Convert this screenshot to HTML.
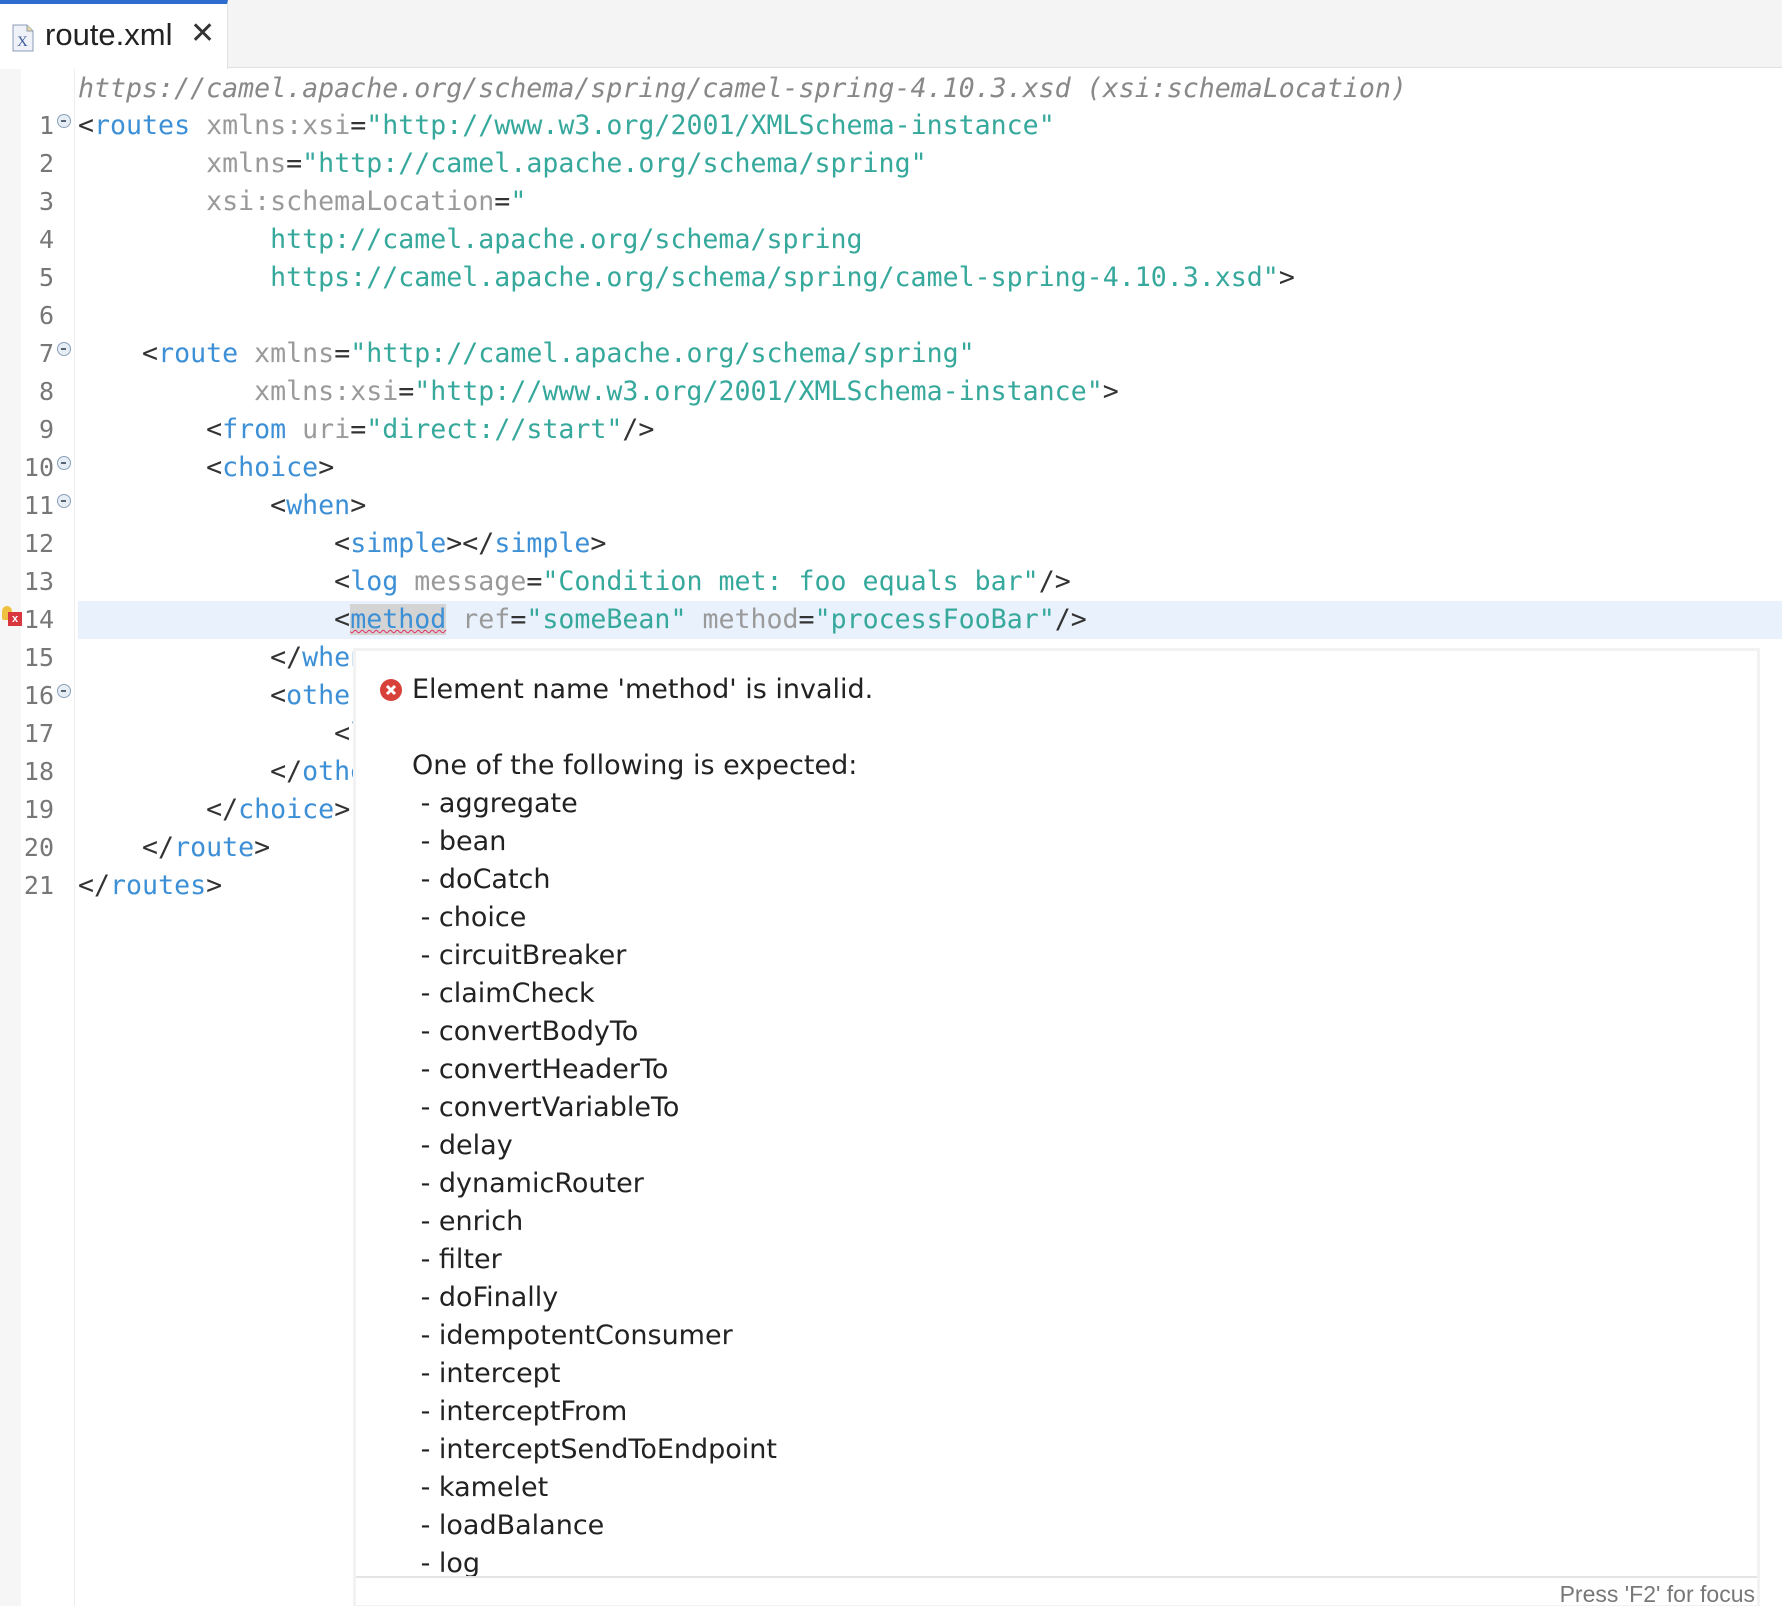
<!DOCTYPE html>
<html><head><meta charset="utf-8"><style>
*{margin:0;padding:0;box-sizing:border-box}
html,body{width:1782px;height:1606px;overflow:hidden;background:#fff;position:relative}
.tabbar{position:absolute;left:0;top:0;width:1782px;height:68px;background:#f4f4f4;border-bottom:1px solid #e2e2e2}
.tab{position:absolute;left:0;top:0;width:228px;height:69px;background:#fff;border-top:4px solid #2f6ccf;border-right:1px solid #e2e2e2}
.tab .t{position:absolute;left:45px;top:13px;font:31px "Liberation Sans",sans-serif;color:#222}
.tab .x{position:absolute;left:190px;top:12px;font:30px "Liberation Sans",sans-serif;color:#333}
.gut{position:absolute;left:0;top:69px;width:21px;height:1537px;background:#f6f6f6}
.gline{position:absolute;left:74px;top:69px;width:1px;height:1537px;background:#eee}
.ln{position:absolute;left:0;width:54px;text-align:right;font:25px "DejaVu Sans Mono","Liberation Sans",sans-serif;color:#777;line-height:38px}
.fold{position:absolute;left:57px;width:14px;height:14px;border-radius:50%;border:1.5px solid #8aa0b8;background:#e6edf4}
.fold:after{content:"";position:absolute;left:3px;top:5px;width:5px;height:1.5px;background:#567}
.code{position:absolute;left:78px;font:26.6px "DejaVu Sans Mono","Liberation Mono",monospace;white-space:pre;line-height:38px;color:#333}
.b{color:#3d8fd6}.a{color:#9a9a9a}.v{color:#36a89c}.p{color:#333}
.hl{position:absolute;left:78px;top:601px;width:1704px;height:38px;background:#e8f1fc}
.tip{position:absolute;left:353px;top:648px;width:1407px;height:960px;background:#fff;border:3px solid #f2f2f2}
.tipin{position:absolute;left:0;top:0;right:0;height:925px;background:#fff;overflow:hidden}
.tt{position:absolute;left:56px;font:27px "DejaVu Sans","Liberation Sans",sans-serif;color:#222;line-height:38px;white-space:pre}
</style></head><body>
<div class="tabbar"></div>
<div class="tab">
<svg style="position:absolute;left:12px;top:20px" width="22" height="28" viewBox="0 0 22 28"><path d="M1 1h14l6 6v20H1z" fill="#eef2f8" stroke="#8b9bb5"/><path d="M15 1v6h6" fill="#e9d9a0" stroke="#8b9bb5"/><text x="5" y="22" font-family="Liberation Serif" font-size="15" fill="#3a5a9a">X</text></svg>
<div class="t">route.xml</div><div class="x">✕</div></div>
<div class="gut"></div><div class="gline"></div>
<div class="hl"></div>
<div class="code" style="top:70px;color:#888;font-style:italic">https://camel.apache.org/schema/spring/camel-spring-4.10.3.xsd (xsi:schemaLocation)</div>

<div class="ln" style="top:107px">1</div><div class="fold" style="top:114px"></div>
<div class="ln" style="top:145px">2</div>
<div class="ln" style="top:183px">3</div>
<div class="ln" style="top:221px">4</div>
<div class="ln" style="top:259px">5</div>
<div class="ln" style="top:297px">6</div>
<div class="ln" style="top:335px">7</div><div class="fold" style="top:342px"></div>
<div class="ln" style="top:373px">8</div>
<div class="ln" style="top:411px">9</div>
<div class="ln" style="top:449px">10</div><div class="fold" style="top:456px"></div>
<div class="ln" style="top:487px">11</div><div class="fold" style="top:494px"></div>
<div class="ln" style="top:525px">12</div>
<div class="ln" style="top:563px">13</div>
<div class="ln" style="top:601px">14</div>
<div class="ln" style="top:639px">15</div>
<div class="ln" style="top:677px">16</div><div class="fold" style="top:684px"></div>
<div class="ln" style="top:715px">17</div>
<div class="ln" style="top:753px">18</div>
<div class="ln" style="top:791px">19</div>
<div class="ln" style="top:829px">20</div>
<div class="ln" style="top:867px">21</div>
<div style="position:absolute;left:2px;top:606px;width:10px;height:14px;background:#f0c040;border-radius:5px 5px 2px 2px"></div>
<div style="position:absolute;left:8px;top:612px;width:14px;height:14px;background:#d9363e;color:#fff;font:bold 11px 'Liberation Sans',sans-serif;text-align:center;line-height:14px">x</div>

<div class="code" style="top:107px"><span class="p">&lt;</span><span class="b">routes</span> <span class="a">xmlns:xsi</span>=<span class="v">"http://www.w3.org/2001/XMLSchema-instance"</span>
        <span class="a">xmlns</span>=<span class="v">"http://camel.apache.org/schema/spring"</span>
        <span class="a">xsi:schemaLocation</span>=<span class="v">"</span>
<span class="v">            http://camel.apache.org/schema/spring</span>
<span class="v">            https://camel.apache.org/schema/spring/camel-spring-4.10.3.xsd"</span>&gt;

    &lt;<span class="b">route</span> <span class="a">xmlns</span>=<span class="v">"http://camel.apache.org/schema/spring"</span>
           <span class="a">xmlns:xsi</span>=<span class="v">"http://www.w3.org/2001/XMLSchema-instance"</span>&gt;
        &lt;<span class="b">from</span> <span class="a">uri</span>=<span class="v">"direct://start"</span>/&gt;
        &lt;<span class="b">choice</span>&gt;
            &lt;<span class="b">when</span>&gt;
                &lt;<span class="b">simple</span>&gt;&lt;/<span class="b">simple</span>&gt;
                &lt;<span class="b">log</span> <span class="a">message</span>=<span class="v">"Condition met: foo equals bar"</span>/&gt;
                &lt;<span class="b" style="background:#d4d4d4;text-decoration:underline wavy #e0306a;text-decoration-thickness:1px">method</span> <span class="a">ref</span>=<span class="v">"someBean"</span> <span class="a">method</span>=<span class="v">"processFooBar"</span>/&gt;
            &lt;/<span class="b">when</span>&gt;
            &lt;<span class="b">otherwise</span>&gt;
                &lt;<span class="b">log</span>/&gt;
            &lt;/<span class="b">otherwise</span>&gt;
        &lt;/<span class="b">choice</span>&gt;
    &lt;/<span class="b">route</span>&gt;
&lt;/<span class="b">routes</span>&gt;</div>

<div class="tip"><div class="tipin">
<svg style="position:absolute;left:23px;top:27px" width="24" height="24" viewBox="0 0 24 24"><circle cx="12" cy="12" r="11" fill="#d8403a"/><path d="M8 8l8 8M16 8l-8 8" stroke="#fff" stroke-width="3"/></svg>
<div class="tt" style="top:20px">Element name 'method' is invalid.

One of the following is expected:
 - aggregate
 - bean
 - doCatch
 - choice
 - circuitBreaker
 - claimCheck
 - convertBodyTo
 - convertHeaderTo
 - convertVariableTo
 - delay
 - dynamicRouter
 - enrich
 - filter
 - doFinally
 - idempotentConsumer
 - intercept
 - interceptFrom
 - interceptSendToEndpoint
 - kamelet
 - loadBalance
 - log</div>
</div>
<div style="position:absolute;left:0;top:925px;width:1401px;height:2px;background:#e4e4e4"></div>
<div style="position:absolute;right:2px;top:930px;font:23px 'Liberation Sans',sans-serif;color:#777">Press 'F2' for focus</div>
</div>
</body></html>
